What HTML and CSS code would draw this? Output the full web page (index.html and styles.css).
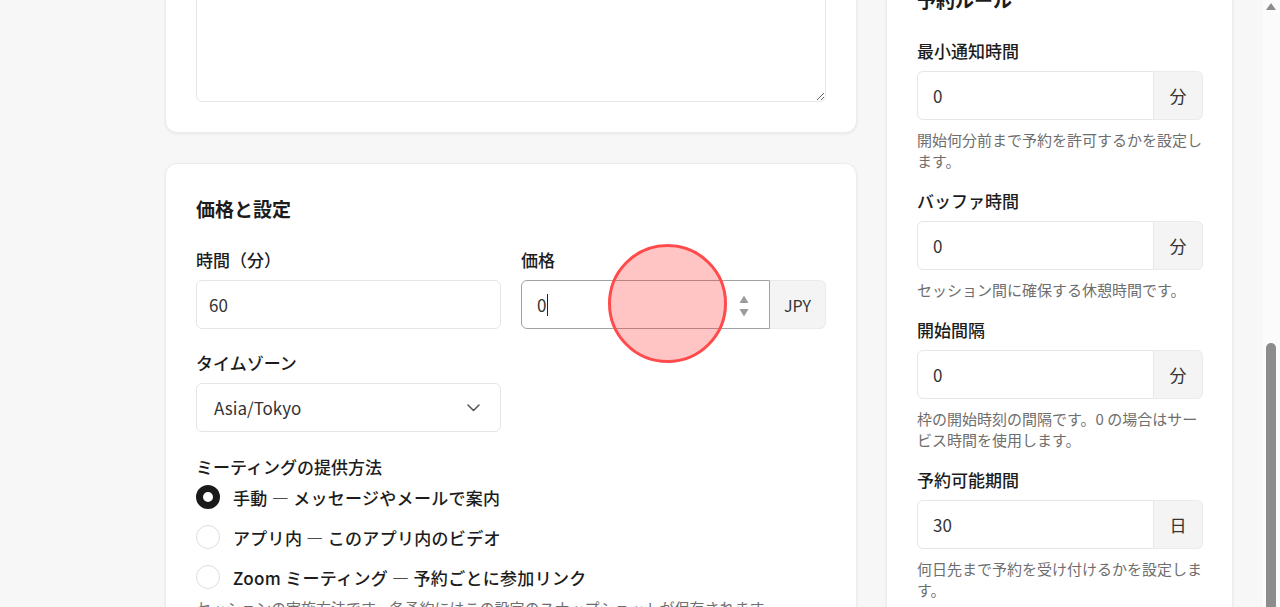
FILE: index.html
```html
<!DOCTYPE html>
<html lang="ja">
  <head>
    <meta charset="utf-8">
    <title>サービス編集</title>
    <link rel="stylesheet" href="styles.css">
  </head>
  <body>
    <div class="screen">
      <div class="viewport">
        <main class="page">
          <section class="col">
            <div class="card">
              <h2 class="card-title">基本情報</h2>
              <div class="field">
                <div class="label">サービス名</div>
                <div class="input">初回カウンセリング</div>
              </div>
              <div class="field spaced">
                <div class="label">説明</div>
                <textarea class="textarea"></textarea>
              </div>
            </div>

            <div class="card">
              <h2 class="card-title">価格と設定</h2>
              <div class="grid2">
                <div class="field">
                  <div class="label">時間（分）</div>
                  <div class="input narrow">60</div>
                </div>
                <div class="field">
                  <div class="label">価格</div>
                  <div class="group">
                    <div class="input focus">
                      <span>0</span><span class="caret"></span>
                      <svg class="spin" width="10" height="22" viewBox="0 0 10 22">
                        <path d="M5 0.5L9.5 8H0.5z" fill="#9b9b9b"/>
                        <path d="M0.5 14h9L5 21.5z" fill="#9b9b9b"/>
                      </svg>
                    </div>
                    <div class="addon wide">JPY</div>
                  </div>
                </div>
                <div class="field">
                  <div class="label">タイムゾーン</div>
                  <div class="input select">
                    <span>Asia/Tokyo</span>
                    <svg class="chev" width="13" height="8" viewBox="0 0 13 8">
                      <path d="M1 1l5.5 5.5L12 1" fill="none" stroke="#555" stroke-width="1.5" stroke-linecap="round" stroke-linejoin="round"/>
                    </svg>
                  </div>
                </div>
              </div>

              <div class="field meeting">
                <div class="label">ミーティングの提供方法</div>
                <div class="radios">
                  <label class="radio"><span class="dot on"></span>手動 — メッセージやメールで案内</label>
                  <label class="radio"><span class="dot"></span>アプリ内 — このアプリ内のビデオ</label>
                  <label class="radio"><span class="dot"></span>Zoom ミーティング — 予約ごとに参加リンク</label>
                </div>
                <p class="help tight">セッションの実施方法です。各予約にはこの設定のスナップショットが保存されます。</p>
              </div>
            </div>
          </section>

          <aside class="col side">
            <div class="card">
              <h2 class="card-title">公開設定</h2>
              <div class="field">
                <div class="label">ステータス</div>
                <div class="input">公開中</div>
                <p class="help">公開中のみ予約ページに表示します。</p>
              </div>
            </div>

            <div class="card rules">
              <h2 class="card-title">予約ルール</h2>
              <div class="field">
                <div class="label">最小通知時間</div>
                <div class="group">
                  <div class="input">0</div>
                  <div class="addon">分</div>
                </div>
                <p class="help">開始何分前まで予約を許可するかを設定します。</p>
              </div>
              <div class="field">
                <div class="label">バッファ時間</div>
                <div class="group">
                  <div class="input">0</div>
                  <div class="addon">分</div>
                </div>
                <p class="help">セッション間に確保する休憩時間です。</p>
              </div>
              <div class="field">
                <div class="label">開始間隔</div>
                <div class="group">
                  <div class="input">0</div>
                  <div class="addon">分</div>
                </div>
                <p class="help">枠の開始時刻の間隔です。0 の場合はサービス時間を使用します。</p>
              </div>
              <div class="field">
                <div class="label">予約可能期間</div>
                <div class="group">
                  <div class="input">30</div>
                  <div class="addon">日</div>
                </div>
                <p class="help">何日先まで予約を受け付けるかを設定します。</p>
              </div>
            </div>
          </aside>
        </main>

        <!-- tap indicator -->
        <div class="touch"></div>
      </div>

      <div class="scrollbar">
        <span class="sb-up"></span>
        <span class="sb-thumb"></span>
      </div>
    </div>
  </body>
</html>
```

FILE: styles.css
```css
* {
  box-sizing: border-box;
}
body {
  margin: 0;
  font-family: "Noto Sans CJK JP", "Noto Sans", sans-serif;
  color: #1c1c1c;
  background: #f7f7f7;
}

.screen {
  display: flex;
  height: 607px;
  overflow: hidden;
}
.viewport {
  flex: 1;
  position: relative;
  overflow: hidden;
}

/* page is scrolled: shift content up */
.page {
  display: grid;
  grid-template-columns: 692px 347px;
  column-gap: 29px;
  align-items: start;
  padding: 24px 0 40px 165px;
  margin-top: -322px;
}
.col {
  display: flex;
  flex-direction: column;
  gap: 30px;
}
.side {
  gap: 25px;
}

.card {
  background: #fff;
  border: 1px solid #ececec;
  border-radius: 12px;
  box-shadow: 0 1px 3px rgba(0, 0, 0, 0.07);
  padding: 30px;
}
.card.rules {
  padding-right: 29px;
}
.card-title {
  margin: 0 0 23px;
  font-size: 19px;
  line-height: 30px;
  font-weight: 700;
}

.field {
  display: flex;
  flex-direction: column;
}
.field.spaced {
  margin-top: 21px;
}
.rules .field + .field {
  margin-top: 17px;
}
.label {
  font-size: 17px;
  line-height: 26px;
  font-weight: 500;
  margin-bottom: 7px;
}

.input {
  display: flex;
  align-items: center;
  height: 49px;
  padding: 0 15px;
  border: 1px solid #e6e6e6;
  border-radius: 6px;
  background: #fff;
  font-size: 17px;
  color: #333;
}
.input.narrow {
  padding-left: 12px;
}
.input.focus {
  border-color: #a2a2a2;
}
.input.select {
  padding: 0 20px 0 17px;
}
.chev,
.spin {
  margin-left: auto;
}
.spin {
  margin-right: 5px;
  margin-top: 2px;
}
.caret {
  display: inline-block;
  width: 1px;
  height: 22px;
  margin-left: 1px;
  background: #222;
}

.group {
  display: flex;
}
.group .input {
  flex: 1;
  min-width: 0;
  border-radius: 6px 0 0 6px;
}
.addon {
  display: flex;
  align-items: center;
  justify-content: center;
  width: 49px;
  height: 49px;
  background: #f4f4f4;
  border: 1px solid #ebebeb;
  border-left: none;
  border-radius: 0 6px 6px 0;
  font-size: 17px;
  color: #333;
}
.addon.wide {
  width: 56px;
  font-size: 16px;
}

.textarea {
  display: block;
  width: 100%;
  height: 180px;
  border: 1px solid #e6e6e6;
  border-radius: 6px;
  resize: vertical;
  font: inherit;
}

.grid2 {
  display: grid;
  grid-template-columns: 1fr 1fr;
  column-gap: 20px;
  row-gap: 21px;
}
.meeting {
  margin-top: 22px;
}
.radios {
  display: flex;
  flex-direction: column;
  gap: 16px;
  margin-top: -2px;
}
.radio {
  display: flex;
  align-items: center;
  gap: 13px;
  height: 24px;
  font-size: 17px;
  font-weight: 500;
  letter-spacing: 0.3px;
}
.dot {
  width: 24px;
  height: 24px;
  border-radius: 50%;
  border: 1px solid #dedede;
  background: #fff;
  flex: none;
}
.dot.on {
  border: 7.5px solid #1a1a1a;
}

.help {
  margin: 9px 0 0;
  font-size: 15px;
  line-height: 21px;
  color: #6e6e6e;
}
.help.tight {
  margin-top: 8px;
}

/* tap indicator over the price field */
.touch {
  position: absolute;
  left: 608px;
  top: 244px;
  width: 119px;
  height: 119px;
  border-radius: 50%;
  border: 3px solid #ff4b4b;
  background: rgba(255, 40, 40, 0.27);
}

.scrollbar {
  display: flex;
  flex-direction: column;
  width: 17px;
  padding: 0 4px 0 3px;
  background: #fbfbfb;
}
.sb-up {
  margin: 3px auto 0;
  width: 0;
  height: 0;
  border-left: 5.5px solid transparent;
  border-right: 5.5px solid transparent;
  border-bottom: 7px solid #8c8c8c;
}
.sb-thumb {
  margin-top: auto;
  height: 264px;
  background: #8c8c8c;
  border-radius: 5px 5px 0 0;
}
```
